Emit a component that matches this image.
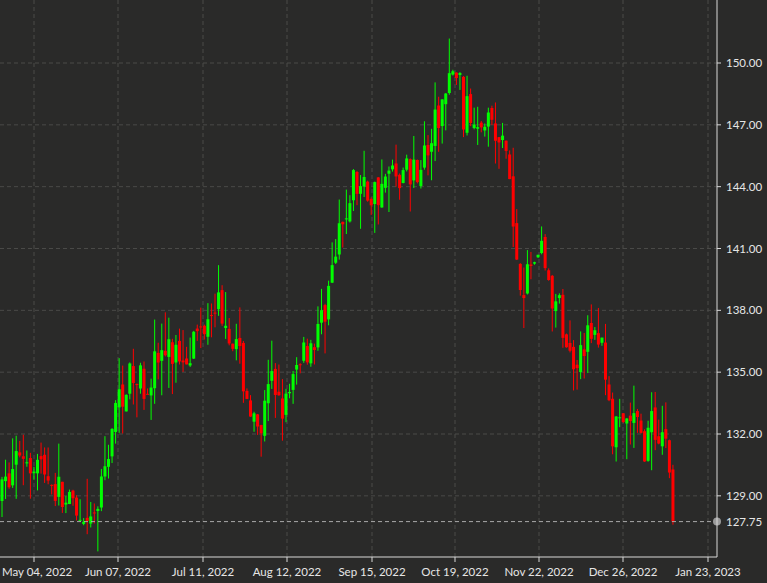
const W = 767;
const H = 583;
const PX = 717; // right edge of plot
const PY = 557; // bottom edge of plot
const yOf = (p: number) => 434 - (p - 132) * (371 / 18);

const waypoints: [number, number][] = [
  [2, 129], [20, 131.3], [40, 130.6], [50, 129.8], [70, 128.4], [85, 126.8], [100, 128.8],
  [112, 132.5], [125, 134.6], [145, 134.5], [160, 135.8], [185, 136], [200, 137], [213, 138.8],
  [228, 137.5], [242, 135], [258, 131.5], [272, 134.5], [288, 133.2], [300, 136], [318, 136.8],
  [330, 139.4], [345, 142.5], [352, 144.2], [372, 143.6], [392, 144.6], [410, 144.8], [428, 145.7],
  [442, 148], [458, 149.8], [463, 147.5], [472, 147.5], [485, 147.8], [497, 146.2], [508, 145.5],
  [514, 141.4], [522, 139.3], [532, 140.2], [540, 141.6], [550, 138.8], [562, 137.6], [570, 135.6],
  [585, 136.6], [600, 136.6], [608, 134.5], [612, 131.8], [625, 132.2], [633, 132.8], [643, 131.3],
  [652, 132.4], [662, 132.1], [668, 131.6], [671, 129.2], [675, 127.8],
];

function target(x: number) {
  for (let i = 0; i < waypoints.length - 1; i++) {
    const [x0, p0] = waypoints[i];
    const [x1, p1] = waypoints[i + 1];
    if (x >= x0 && x <= x1) return p0 + ((p1 - p0) * (x - x0)) / (x1 - x0);
  }
  return waypoints[waypoints.length - 1][1];
}

let seed = 7;
const rnd = () => {
  seed = (seed * 16807) % 2147483647;
  return seed / 2147483647;
};

type Candle = { x: number; o: number; c: number; h: number; l: number };
const candles: Candle[] = [];
let prev = 129;
for (let x = 2; x <= 675; x += 3.55) {
  const t = target(x);
  const o = prev + (rnd() - 0.5) * 0.5;
  const c = t + (rnd() - 0.5) * 1.9;
  const h = Math.max(o, c) + rnd() * rnd() * 2;
  const l = Math.min(o, c) - rnd() * rnd() * 2;
  candles.push({ x, o, c, h, l });
  prev = c;
}
const last = candles[candles.length - 1];
last.c = 127.75;
last.l = 127.6;

const prices = ["150.00", "147.00", "144.00", "141.00", "138.00", "135.00", "132.00", "129.00"];
const dates: [number, string][] = [
  [34, "May 04, 2022"], [118, "Jun 07, 2022"], [203, "Jul 11, 2022"], [287, "Aug 12, 2022"],
  [372, "Sep 15, 2022"], [455, "Oct 19, 2022"], [539, "Nov 22, 2022"], [623, "Dec 26, 2022"],
  [708, "Jan 23, 2023"],
];

export default function App() {
  const y127 = yOf(127.75);
  return (
    <div className="w-[767px] h-[583px] bg-[#2a2a29] overflow-hidden">
      <svg width={W} height={H} className="block" style={{ fontFamily: "Lato, 'Open Sans', sans-serif" }}>
        {prices.map((p) => {
          const y = yOf(parseFloat(p));
          return (
            <g key={p}>
              <line x1={0} x2={PX} y1={y} y2={y} stroke="#4a4a48" strokeDasharray="4 3" />
              <line x1={PX} x2={PX + 4} y1={y} y2={y} stroke="#d8d8d8" />
              <text x={726} y={y + 4} fill="#e6e6e6" fontSize={11.5}>{p}</text>
            </g>
          );
        })}
        {dates.map(([x, d], i) => (
          <g key={d}>
            <line x1={x} x2={x} y1={0} y2={PY} stroke="#4a4a48" strokeDasharray="4 3" />
            <line x1={x} x2={x} y1={PY} y2={PY + 5} stroke="#d8d8d8" />
            <text
              x={i === 0 ? 2 : x}
              y={576}
              fill="#e6e6e6"
              fontSize={11.5}
              textAnchor={i === 0 ? "start" : "middle"}
            >
              {d}
            </text>
          </g>
        ))}
        {candles.map((k, i) => {
          const col = k.c >= k.o ? "#00ff00" : "#ff0000";
          const top = yOf(Math.max(k.o, k.c));
          const bot = yOf(Math.min(k.o, k.c));
          return (
            <g key={i}>
              <line x1={k.x} x2={k.x} y1={yOf(k.h)} y2={yOf(k.l)} stroke={col} strokeWidth={1} />
              <rect x={k.x - 1.5} y={top} width={3} height={Math.max(1, bot - top)} fill={col} />
            </g>
          );
        })}
        <line x1={0} x2={PX} y1={y127} y2={y127} stroke="#a8a8a8" strokeDasharray="4 3" />
        <circle cx={PX} cy={y127} r={4} fill="#9a9a9a" />
        <text x={726} y={y127 + 4} fill="#e6e6e6" fontSize={11.5}>127.75</text>
        <line x1={PX} x2={PX} y1={0} y2={PY} stroke="#d8d8d8" />
        <line x1={0} x2={PX} y1={PY} y2={PY} stroke="#d8d8d8" />
      </svg>
    </div>
  );
}
